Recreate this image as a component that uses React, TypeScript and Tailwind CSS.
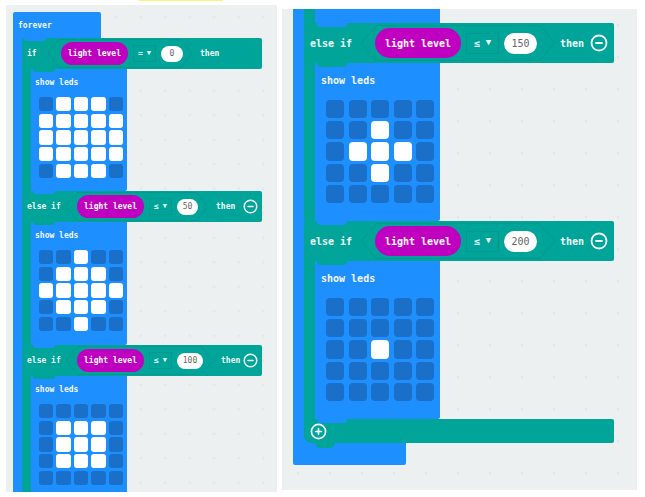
import React from 'react';
import { CircleMinus, CirclePlus } from 'lucide-react';

const FONT = "font-['DejaVu_Sans_Mono',monospace] font-bold";

type Size = { large: boolean };

const rows = {
  full: ['01110', '11111', '11111', '11111', '01110'],
  diamond: ['00100', '01110', '11111', '01110', '00100'],
  square: ['00000', '01110', '01110', '01110', '00000'],
  plus: ['00000', '00100', '01110', '00100', '00000'],
  dot: ['00000', '00000', '00100', '00000', '00000'],
};

const Leds = ({ pattern, large }: Size & { pattern: string[] }) => (
  <div
    className={
      large
        ? 'grid grid-cols-5 w-[108px] h-[103px] gap-x-[4.5px] gap-y-[3.2px]'
        : 'grid grid-cols-5 w-[84px] h-[81px] gap-x-[3.2px] gap-y-[2.3px]'
    }
  >
    {pattern.join('').split('').map((on, i) => (
      <div
        key={i}
        className={`${large ? 'rounded-[4px]' : 'rounded-[3px]'} ${on === '1' ? 'bg-white' : 'bg-[#1a6fc8]'}`}
      />
    ))}
  </div>
);

const ShowLeds = ({
  pattern,
  large,
  height,
  label,
}: Size & { pattern: string[]; height: string; label: string }) => (
  <div className="flex w-max">
    <div className={large ? 'w-[11px] shrink-0 bg-[#00a499]' : 'w-[9px] shrink-0 bg-[#00a499]'} />
    <div
      className={`relative shrink-0 rounded-br-[2px] bg-[#1e8fff] ${height} ${
        large ? 'w-[125px] pl-[11px] pt-[11px]' : 'w-[96px] pl-[8px] pt-[8px]'
      }`}
    >
      <div className={`${FONT} text-[#f2f8ff] ${large ? 'text-[10px] leading-[14px] -ml-[5px]' : 'text-[8px] leading-[11px] -ml-[4px]'}`}>
        {label}
      </div>
      <div className={large ? 'mt-[12px]' : 'mt-[9px]'}>
        <Leds pattern={pattern} large={large} />
      </div>
      <div
        className={`absolute top-full z-10 bg-[#1e8fff] ${
          large ? 'left-[2px] w-[30px] h-[4px] rounded-b-[6px]' : 'left-[2px] w-[22px] h-[3px] rounded-b-[5px]'
        }`}
      />
    </div>
  </div>
);

// hexagon outline behind the boolean condition
const Hexagon = () => (
  <svg className="absolute inset-0 w-full h-full" viewBox="0 0 100 30" preserveAspectRatio="none">
    <polygon
      points="0,15 8,0.5 92,0.5 100,15 92,29.5 8,29.5"
      fill="#00a499"
      stroke="#009a90"
      strokeWidth="1"
      vectorEffect="non-scaling-stroke"
    />
  </svg>
);

const Condition = ({
  op,
  value,
  large,
  ovalWidth,
  hexPad,
}: Size & { op: string; value: string; ovalWidth: string; hexPad: string }) => (
  <div className={`relative flex items-center self-stretch ${hexPad} ${large ? 'my-[2px]' : 'my-[1px]'}`}>
    <Hexagon />
    <div
      className={`relative flex items-center justify-center rounded-full bg-[#c000c0] text-white ${FONT} ${
        large ? 'w-[86px] h-[30px] text-[10px]' : 'w-[67px] h-[23px] text-[8px]'
      }`}
    >
      light level
    </div>
    <div
      className={`relative flex items-center justify-center border border-[#009a90] text-[#e9fbfa] ${FONT} ${
        large ? 'ml-[5px] w-[33px] h-[21px] gap-[6px] text-[10px]' : 'ml-[5px] w-[23px] h-[17px] gap-[4px] text-[8px]'
      }`}
    >
      <span>{op}</span>
      <span className={large ? 'text-[9px]' : 'text-[7px]'}>▼</span>
    </div>
    <div
      className={`relative flex items-center justify-center rounded-full bg-white text-[#666] ${FONT} font-normal ${ovalWidth} ${
        large ? 'ml-[5px] h-[21px] text-[10px]' : 'ml-[5px] h-[16px] text-[8px]'
      }`}
    >
      {value}
    </div>
  </div>
);

const IfRow = ({
  label,
  op,
  value,
  large,
  ovalWidth,
  hexPad,
  labelWidth,
  thenGap,
  removable = true,
}: Size & {
  label: string;
  op: string;
  value: string;
  ovalWidth: string;
  hexPad: string;
  labelWidth: string;
  thenGap: string;
  removable?: boolean;
}) => (
  <div
    className={`relative flex items-center rounded-r-[2px] rounded-tl-[2px] bg-[#00a499] text-[#f2fbfa] ${FONT} ${
      large ? 'w-[310px] h-[40px] pl-[6px] text-[10px]' : 'w-[240px] h-[31px] pl-[5px] text-[8px]'
    }`}
  >
    <span className={labelWidth}>{label}</span>
    <Condition op={op} value={value} large={large} ovalWidth={ovalWidth} hexPad={hexPad} />
    <span className={thenGap}>then</span>
    {removable && (
      <CircleMinus
        className={large ? 'absolute right-[6px] w-[18px] h-[18px]' : 'absolute right-[4px] w-[15px] h-[15px]'}
        strokeWidth={2.4}
      />
    )}
    <div
      className={`absolute top-full z-10 bg-[#00a499] ${
        large ? 'left-[13px] w-[30px] h-[4px] rounded-b-[6px]' : 'left-[11px] w-[22px] h-[3px] rounded-b-[5px]'
      }`}
    />
  </div>
);

const LeftPanel = () => (
  <div className="ml-[6px] mt-[5px] w-[271px] h-[487px] overflow-hidden pl-[7px] pt-[7px] bg-[#ecf0f1] bg-[radial-gradient(circle,#e2e6e8_1px,transparent_1.2px)] bg-[size:24.5px_24.5px]">
    <div className="w-[88px] rounded-t-[2px] bg-[#1e8fff] pl-[9px]">
      <div className={`relative h-[26px] -ml-[4px] pt-[8px] text-[8px] leading-[11px] text-[#f2f8ff] ${FONT}`}>
        forever
        <div className="absolute top-full left-[6px] z-10 h-[3px] w-[22px] rounded-b-[5px] bg-[#1e8fff]" />
      </div>
      <IfRow
        large={false}
        label="if"
        op="="
        value="0"
        ovalWidth="w-[22px]"
        hexPad="pl-[13px] pr-[9px]"
        labelWidth="w-[21px]"
        thenGap="ml-[8px]"
        removable={false}
      />
      <ShowLeds large={false} label="show leds" pattern={rows.full} height="h-[122px]" />
      <IfRow
        large={false}
        label="else if"
        op="≤"
        value="50"
        ovalWidth="w-[21px]"
        hexPad="pl-[11px] pr-[10px]"
        labelWidth="w-[39px]"
        thenGap="ml-[8px]"
      />
      <ShowLeds large={false} label="show leds" pattern={rows.diamond} height="h-[123px]" />
      <IfRow
        large={false}
        label="else if"
        op="≤"
        value="100"
        ovalWidth="w-[26px]"
        hexPad="pl-[11px] pr-[10px]"
        labelWidth="w-[39px]"
        thenGap="ml-[8px]"
      />
      <ShowLeds large={false} label="show leds" pattern={rows.square} height="h-[120px]" />
    </div>
  </div>
);

const RightPanel = () => (
  <div className="ml-[5px] mt-[9px] w-[355px] h-[481px] overflow-hidden pl-[11px] bg-[#ecf0f1] bg-[radial-gradient(circle,#e2e6e8_1px,transparent_1.2px)] bg-[size:32px_32px]">
    <div className="w-[113px] rounded-b-[2px] bg-[#1e8fff] pl-[11px] pb-[22px]">
      <div className="flex w-max">
        <div className="w-[11px] h-[14px] shrink-0 bg-[#00a499]" />
        <div className="relative w-[125px] h-[14px] shrink-0 bg-[#1e8fff]">
          <div className="absolute top-full left-[2px] z-10 h-[4px] w-[30px] rounded-b-[6px] bg-[#1e8fff]" />
        </div>
      </div>
      <IfRow
        large
        label="else if"
        op="≤"
        value="150"
        ovalWidth="w-[33px]"
        hexPad="pl-[14px] pr-[18px]"
        labelWidth="w-[51px]"
        thenGap="ml-[5px]"
      />
      <ShowLeds large label="show leds" pattern={rows.plus} height="h-[158px]" />
      <IfRow
        large
        label="else if"
        op="≤"
        value="200"
        ovalWidth="w-[33px]"
        hexPad="pl-[14px] pr-[18px]"
        labelWidth="w-[51px]"
        thenGap="ml-[5px]"
      />
      <ShowLeds large label="show leds" pattern={rows.dot} height="h-[158px]" />
      <div className="relative flex h-[24px] w-[310px] items-center rounded-[2px] rounded-bl-[8px] bg-[#00a499] pl-[6px] text-[#f2fbfa]">
        <CirclePlus className="h-[17px] w-[17px]" strokeWidth={2.4} />
        <div className="absolute top-full left-[11px] z-10 h-[5px] w-[20px] rounded-b-[7px] bg-[#00a499]" />
      </div>
    </div>
  </div>
);

export default function App() {
  return (
    <div className="relative flex h-[497px] w-[645px] overflow-hidden bg-white items-start">
      <div className="absolute left-[139px] top-0 h-[1px] w-[84px] bg-[#fff27a]" />
      <LeftPanel />
      <RightPanel />
    </div>
  );
}
